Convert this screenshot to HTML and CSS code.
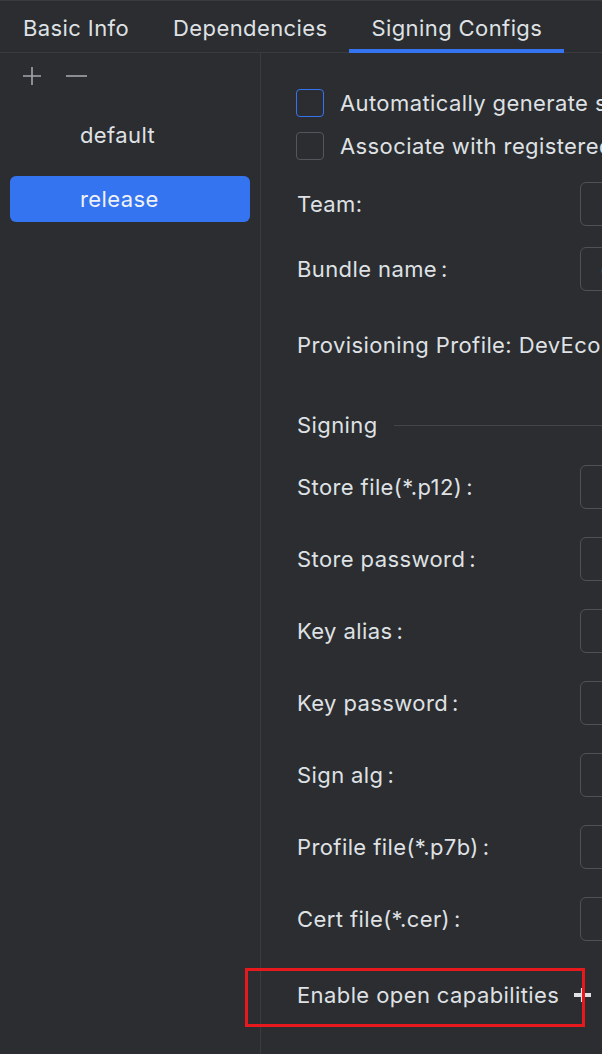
FILE: index.html
```html
<!DOCTYPE html>
<html lang="en">
<head>
<meta charset="UTF-8">
<meta name="viewport" content="width=device-width, initial-scale=1.0">
<title>Signing Configs</title>
<link rel="stylesheet" href="styles.css">
</head>
<body>

<div class="tabs">
  <div class="tab">Basic Info</div>
  <div class="tab">Dependencies</div>
  <div class="tab active">Signing Configs</div>
</div>

<div class="main">
  <div class="sidebar">
    <div class="toolbar">
      <svg width="20" height="20" viewBox="0 0 20 20"><path d="M10 1v18M1 10h18" stroke="#a3a6ad" stroke-width="1.6" fill="none"/></svg>
      <svg width="21" height="20" viewBox="0 0 21 20"><path d="M0 10h21" stroke="#a3a6ad" stroke-width="1.6" fill="none"/></svg>
    </div>
    <div class="config">default</div>
    <div class="config selected">release</div>
  </div>

  <div class="panel">
    <div class="check-row first">
      <span class="checkbox focused"></span>
      <span>Automatically generate signature</span>
    </div>
    <div class="check-row">
      <span class="checkbox"></span>
      <span>Associate with registered bundle name</span>
    </div>

    <div class="row gap-team">
      <label>Team:</label>
      <div class="field">Select a team</div>
    </div>
    <div class="row gap-bundle">
      <label>Bundle name<span class="colon">:</span></label>
      <div class="field">com.example.app</div>
    </div>
    <div class="row gap-profile">
      <span>Provisioning Profile: DevEco Studio managed profile</span>
    </div>

    <div class="row gap-section">
      <span>Signing</span>
      <span class="rule"></span>
    </div>

    <div class="row gap-first">
      <label>Store file(*.p12)<span class="colon">:</span></label>
      <div class="field"></div>
    </div>
    <div class="row gap-field">
      <label>Store password<span class="colon">:</span></label>
      <div class="field"></div>
    </div>
    <div class="row gap-field">
      <label>Key alias<span class="colon">:</span></label>
      <div class="field"></div>
    </div>
    <div class="row gap-field">
      <label>Key password<span class="colon">:</span></label>
      <div class="field"></div>
    </div>
    <div class="row gap-field">
      <label>Sign alg<span class="colon">:</span></label>
      <div class="field"></div>
    </div>
    <div class="row gap-field">
      <label>Profile file(*.p7b)<span class="colon">:</span></label>
      <div class="field"></div>
    </div>
    <div class="row gap-field">
      <label>Cert file(*.cer)<span class="colon">:</span></label>
      <div class="field"></div>
    </div>

    <div class="row gap-caps marked">
      <span>Enable open capabilities</span>
      <svg class="add" width="18" height="18" viewBox="0 0 18 18"><path d="M9 2v14" stroke="#dfe1e5" stroke-width="2.2"/><path d="M1 9h17" stroke="#dfe1e5" stroke-width="4"/></svg>
    </div>
  </div>
</div>

</body>
</html>
```

FILE: styles.css
```css
body {
  margin: 0;
  height: 1054px;
  overflow: hidden;
  background-color: #2b2d30;
  color: #dfe1e5;
  font-family: Inter, "Noto Sans", sans-serif;
  font-size: 22px;
  letter-spacing: 0.4px;
}

.tabs {
  display: flex;
  height: 53px;
  padding-left: 1px;
  border-top: 1px solid #393b40;
  border-bottom: 1px solid #393b40;
  box-sizing: border-box;
}

.tab {
  padding: 6px 22px 0;
  display: flex;
  align-items: center;
  border-bottom: 4px solid transparent;
  margin-bottom: -1px;
}

.tab.active {
  border-bottom-color: #3574f0;
}

.main {
  display: flex;
  height: calc(100% - 53px);
}

.sidebar {
  width: 261px;
  flex-shrink: 0;
  border-right: 1px solid #393b40;
  padding: 13px 10px 0;
  box-sizing: border-box;
}

.toolbar {
  display: flex;
  gap: 24px;
  padding-left: 12px;
  height: 20px;
}

.config {
  height: 46px;
  display: flex;
  align-items: center;
  padding-left: 70px;
  border-radius: 6px;
  margin-top: 26px;
}

.config.selected {
  margin-top: 18px;
  background-color: #3574f0;
  color: #eef1f6;
}

.panel {
  flex: 1;
  padding: 28px 0 0 36px;
  white-space: nowrap;
  min-width: 0;
}

.check-row,
.row {
  display: flex;
  align-items: center;
  height: 44px;
}

.check-row {
  gap: 16px;
  height: 43px;
}

.checkbox {
  width: 26px;
  height: 26px;
  border: 1px solid #53565c;
  border-radius: 4px;
  flex-shrink: 0;
  margin-left: -1px;
}

.checkbox.focused {
  border-color: #3574f0;
}

.row label {
  width: 283px;
  flex-shrink: 0;
}

.colon {
  margin-left: 4px;
}

.field {
  width: 400px;
  height: 44px;
  flex-shrink: 0;
  border: 1px solid #4e5157;
  border-radius: 6px;
  box-sizing: border-box;
  padding-left: 20px;
  line-height: 42px;
}

.gap-team { margin-top: 15px; }
.gap-bundle { margin-top: 21px; }
.gap-profile { margin-top: 32px; }
.gap-section { margin-top: 36px; }
.gap-first { margin-top: 18px; }
.gap-field { margin-top: 28px; }
.gap-caps { margin-top: 32px; }

.rule {
  flex: 1;
  height: 1px;
  margin-left: 16px;
  background-color: #43454a;
}

.add {
  margin-left: 14px;
}

.marked {
  position: relative;
}

/* red highlight frame drawn over the last row */
.marked::after {
  content: "";
  position: absolute;
  left: -52px;
  top: -5px;
  width: 334px;
  height: 53px;
  border: 3px solid #e8191c;
}
```
